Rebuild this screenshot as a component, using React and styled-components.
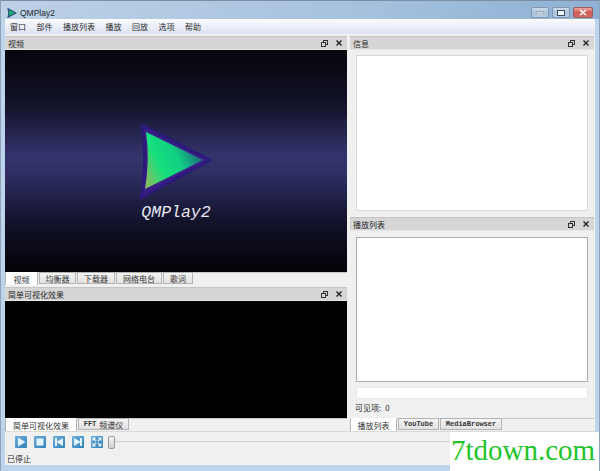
import React from 'react';
import styled, { createGlobalStyle } from 'styled-components';

const cjk = '"Noto Sans CJK SC", "Liberation Sans", sans-serif';

const Global = createGlobalStyle`
  html, body { margin: 0; padding: 0; background: #bdd5ec; }
  * { box-sizing: border-box; }
`;

const Frame = styled.div`
  position: relative;
  width: 600px;
  height: 471px;
  overflow: hidden;
  display: flex;
  flex-direction: column;
  background: #bdd5ec;
  border-left: 1px solid #8ea3b8;
  border-right: 1px solid #8ea3b8;
  font-family: ${cjk};
  color: #2a2a2a;
`;

const TitleBar = styled.div`
  height: 19px;
  flex: none;
  display: flex;
  align-items: center;
  padding: 5px 6px 0 6px;
  gap: 3px;
  border-top: 1px solid #7b8ea3;
  background: linear-gradient(90deg, #bdd1e7 0, #a8c3df 55%, #8fb1d5 100%);
`;

const Title = styled.span`
  font: 8.5px "Liberation Sans", sans-serif;
  color: #20262c;
  flex: 1;
`;

const WinButton = styled.div`
  width: ${(p) => p.$w}px;
  height: 11px;
  border: 1px solid ${(p) => (p.$close ? '#9c5a5a' : '#7f97b0')};
  border-radius: 2px;
  display: flex;
  align-items: center;
  justify-content: center;
  background: ${(p) =>
    p.$close
      ? 'linear-gradient(180deg, #e9a9a2, #cf5a50 50%, #d2706a)'
      : 'linear-gradient(180deg, #cfdeee, #a9c0d9 50%, #b9cee2)'};
`;

const MenuBar = styled.div`
  height: 15px;
  flex: none;
  margin: 0 4px;
  display: flex;
  align-items: center;
  padding-left: 5px;
  gap: 10.5px;
  font-size: 8px;
  background: linear-gradient(180deg, #fbfcfe 0, #eef1f9 40%, #dde2f2 100%);
`;

const Client = styled.div`
  flex: 1;
  min-height: 0;
  margin: 0 4px;
  display: flex;
  flex-direction: column;
  background: #f0f0f0;
`;

const Docks = styled.div`
  flex: none;
  height: 397px;
  display: flex;
  gap: 3px;
  padding-top: 2px;
`;

const Column = styled.div`
  width: ${(p) => p.$w}px;
  flex: none;
  display: flex;
  flex-direction: column;
`;

const DockTitle = styled.div`
  height: 14px;
  flex: none;
  display: flex;
  align-items: center;
  justify-content: space-between;
  padding: 0 5px 0 3px;
  font-size: 8px;
  background: #d6d6d6;
  border-top: 1px solid #c4c4c4;
  border-bottom: 1px solid #e6e6e6;
`;

const DockIcons = styled.div`
  display: flex;
  align-items: center;
  gap: 8px;
`;

const VideoArea = styled.div`
  height: 222px;
  flex: none;
  display: flex;
  flex-direction: column;
  align-items: center;
  padding-top: 72px;
  background: linear-gradient(180deg, #06060c 0, #13132a 25%, #34346e 48%, #2e2e62 56%, #12122a 78%, #030308 100%);
`;

const LogoSvg = styled.svg`
  flex: none;
  filter: blur(0.5px);
`;

const LogoText = styled.div`
  font: italic 16.5px/20px "Liberation Mono", monospace;
  color: #e8e8f0;
  margin-top: 3px;
`;

const BlackArea = styled.div`
  height: 117px;
  flex: none;
  background: #000;
`;

const TabRow = styled.div`
  height: 13px;
  flex: none;
  display: flex;
  gap: 1px;
  border-top: 1px solid #c8c8c8;
`;

const Tab = styled.div`
  width: ${(p) => p.$w}px;
  height: ${(p) => (p.$active ? 13 : 12)}px;
  margin-top: -1px;
  display: flex;
  align-items: center;
  justify-content: center;
  gap: 3px;
  font-size: 8px;
  color: #333;
  background: ${(p) => (p.$active ? '#fff' : 'linear-gradient(180deg, #f4f4f4, #e2e2e2)')};
  border: 1px solid #b4b4b4;
  border-top-color: ${(p) => (p.$active ? '#fff' : '#b4b4b4')};
  ${(p) => p.$active && 'border-bottom: 0;'}
`;

const MonoLabel = styled.span`
  font: 700 7px "Liberation Mono", monospace;
`;

const Gap = styled.div`
  height: ${(p) => p.$h}px;
  flex: none;
`;

const PanelBody = styled.div`
  height: ${(p) => p.$h}px;
  flex: none;
  display: flex;
  flex-direction: column;
  padding: ${(p) => p.$top}px 6px 0 6px;
`;

const WhiteBox = styled.div`
  height: ${(p) => p.$h}px;
  flex: none;
  background: #fff;
  border: 1px solid ${(p) => p.$line || '#aeaeae'};
`;

const CountLine = styled.div`
  height: 15px;
  flex: none;
  display: flex;
  align-items: center;
  gap: 4px;
  font-size: 8px;
  margin-top: 1px;
  margin-left: -1px;
`;

const Toolbar = styled.div`
  height: 21px;
  flex: none;
  display: flex;
  align-items: center;
  gap: 7px;
  padding: 0 0 0 10px;
  border-top: 1px solid #dadada;
`;

const ToolButton = styled.div`
  width: 12px;
  height: 12px;
  flex: none;
  display: flex;
  align-items: center;
  justify-content: center;
  background: linear-gradient(135deg, #6fb0dc, #2f7fb8);
  border-radius: 1px;
`;

const Slider = styled.div`
  flex: 1;
  display: flex;
  align-items: center;
  margin-left: -2px;
  margin-right: 4px;
`;

const Handle = styled.div`
  width: 7px;
  height: 13px;
  flex: none;
  background: linear-gradient(180deg, #f5f5f5, #cfcfcf);
  border: 1px solid #9a9a9a;
  border-radius: 2px;
`;

const Groove = styled.div`
  flex: 1;
  height: 2px;
  background: #d2d2d2;
  border-bottom: 1px solid #ececec;
`;

const StatusBar = styled.div`
  height: 13px;
  flex: none;
  display: flex;
  align-items: center;
  padding-left: 2px;
  font-size: 8px;
`;

const Watermark = styled.div`
  position: absolute;
  right: -1px;
  bottom: 0;
  width: 150px;
  height: 39px;
  padding: 0 4px 2px 0;
  background: #fff;
  display: flex;
  align-items: center;
  justify-content: center;
  font: 29px "Liberation Serif", serif;
  color: #22c42a;
`;

const AppIcon = () => (
  <svg width="10" height="10" viewBox="0 0 13 14">
    <path d="M1 1 L12 7 L1 13 Q3 7 1 1Z" fill="#1bb27a" stroke="#2a4f78" strokeWidth="1.6" />
  </svg>
);

const FloatIcon = () => (
  <svg width="7" height="7" viewBox="0 0 7 7" fill="none" stroke="#333">
    <rect x="2.5" y="0.5" width="4" height="4" />
    <rect x="0.5" y="2.5" width="4" height="4" fill="#d6d6d6" />
  </svg>
);

const CloseIcon = () => (
  <svg width="6" height="6" viewBox="0 0 6 6" stroke="#222" strokeWidth="1.4">
    <path d="M0.5 0.5 L5.5 5.5 M5.5 0.5 L0.5 5.5" />
  </svg>
);

const Dock = ({ title }) => (
  <DockTitle>
    <span>{title}</span>
    <DockIcons>
      <FloatIcon />
      <CloseIcon />
    </DockIcons>
  </DockTitle>
);

const BigLogo = () => (
  <LogoSvg width="76" height="78" viewBox="0 0 76 78">
    <defs>
      <linearGradient id="logoFill" x1="0.05" y1="0.85" x2="1" y2="0.4">
        <stop offset="0" stopColor="#7cbf62" />
        <stop offset="0.28" stopColor="#17e07c" />
        <stop offset="0.6" stopColor="#10cf84" />
        <stop offset="1" stopColor="#1f5f7f" />
      </linearGradient>
    </defs>
    <path d="M4 3 L72 38 L3 76 Q10 38 4 3Z" fill="#3a1d86" stroke="#2d1a78" strokeWidth="3" strokeLinejoin="round" />
    <path d="M8 10 L65 38 L7 67 Q12 38 8 10Z" fill="url(#logoFill)" />
  </LogoSvg>
);

const tools = [
  <path key="p" d="M3 1.5 L10.5 6 L3 10.5Z" fill="#e4f2fb" />,
  <rect key="s" x="2.5" y="2.5" width="7" height="7" fill="#e4f2fb" />,
  <path key="b" d="M2 2 H4 V5.5 L10 2 V10 L4 6.5 V10 H2Z" fill="#e4f2fb" />,
  <path key="n" d="M10 2 H8 V5.5 L2 2 V10 L8 6.5 V10 H10Z" fill="#e4f2fb" />,
  <path key="f" d="M1.5 1.5 H5 L3.8 2.8 L5.5 4.5 L4.5 5.5 L2.8 3.8 L1.5 5Z M10.5 1.5 V5 L9.2 3.8 L7.5 5.5 L6.5 4.5 L8.2 2.8 L7 1.5Z M1.5 10.5 V7 L2.8 8.2 L4.5 6.5 L5.5 7.5 L3.8 9.2 L5 10.5Z M10.5 10.5 H7 L8.2 9.2 L6.5 7.5 L7.5 6.5 L9.2 8.2 L10.5 7Z" fill="#e4f2fb" />,
];

export default function App() {
  return (
    <>
      <Global />
      <Frame>
        <TitleBar>
          <AppIcon />
          <Title>QMPlay2</Title>
          <WinButton $w={18}>
            <svg width="8" height="3"><rect width="8" height="2" y="1" fill="#eef4fa" stroke="#4c5c6c" strokeWidth="0.5" /></svg>
          </WinButton>
          <WinButton $w={18}>
            <svg width="8" height="7" fill="none" stroke="#3c4c5c"><rect x="0.5" y="1.5" width="7" height="5" fill="#eef4fa" /></svg>
          </WinButton>
          <WinButton $w={20} $close>
            <svg width="8" height="7" stroke="#fff" strokeWidth="1.6"><path d="M1 1 L7 6 M7 1 L1 6" /></svg>
          </WinButton>
        </TitleBar>
        <MenuBar>
          {['窗口', '部件', '播放列表', '播放', '回放', '选项', '帮助'].map((m) => (
            <span key={m}>{m}</span>
          ))}
        </MenuBar>
        <Client>
          <Docks>
            <Column $w={342}>
              <Dock title="视频" />
              <VideoArea>
                <BigLogo />
                <LogoText>QMPlay2</LogoText>
              </VideoArea>
              <TabRow>
                <Tab $w={33} $active>视频</Tab>
                <Tab $w={37}>均衡器</Tab>
                <Tab $w={38}>下载器</Tab>
                <Tab $w={46}>网络电台</Tab>
                <Tab $w={30}>歌词</Tab>
              </TabRow>
              <Gap $h={2} />
              <Dock title="简单可视化效果" />
              <BlackArea />
              <TabRow>
                <Tab $w={72} $active>简单可视化效果</Tab>
                <Tab $w={51}><MonoLabel>FFT</MonoLabel>频谱仪</Tab>
              </TabRow>
            </Column>
            <Column $w={244}>
              <Dock title="信息" />
              <PanelBody $h={167} $top={5}>
                <WhiteBox $h={156} $line="#d8d8d8" />
              </PanelBody>
              <Dock title="播放列表" />
              <PanelBody $h={187} $top={6}>
                <WhiteBox $h={145} />
                <Gap $h={5} />
                <WhiteBox $h={12} $line="#e8e8e8" />
                <CountLine><span>可见项:</span><span>0</span></CountLine>
              </PanelBody>
              <TabRow>
                <Tab $w={47} $active>播放列表</Tab>
                <Tab $w={41}><MonoLabel>YouTube</MonoLabel></Tab>
                <Tab $w={62}><MonoLabel>MediaBrowser</MonoLabel></Tab>
              </TabRow>
            </Column>
          </Docks>
          <Toolbar>
            {tools.map((t, i) => (
              <ToolButton key={i}>
                <svg width="12" height="12" viewBox="0 0 12 12">{t}</svg>
              </ToolButton>
            ))}
            <Slider>
              <Handle />
              <Groove />
            </Slider>
          </Toolbar>
          <StatusBar>已停止</StatusBar>
        </Client>
        <Gap $h={6} />
        <Watermark>7tdown.com</Watermark>
      </Frame>
    </>
  );
}
